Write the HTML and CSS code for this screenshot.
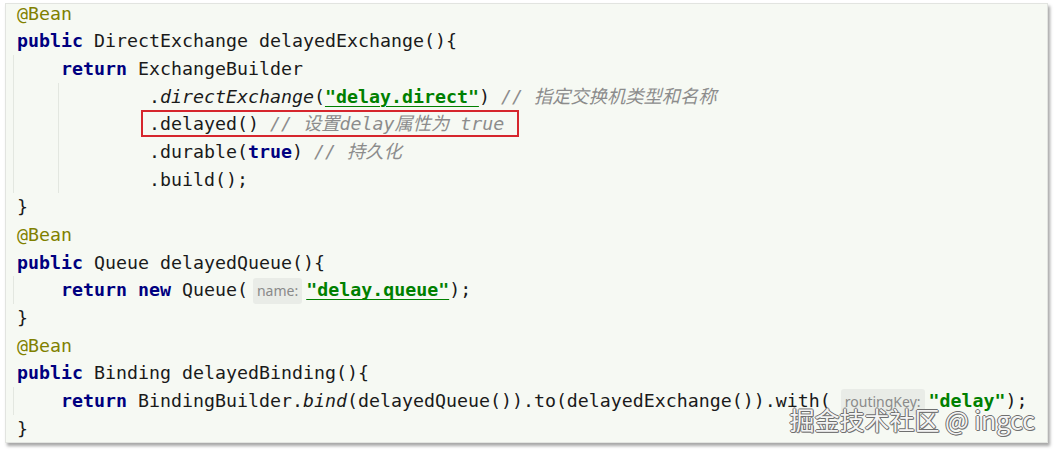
FILE: index.html
```html
<!DOCTYPE html>
<html lang="zh">
<head>
<meta charset="utf-8">
<title>delayed exchange</title>
<link rel="stylesheet" href="styles.css">
</head>
<body>
<div class="panel">
  <div class="code">
    <div class="ln"><span class="ann">@Bean</span></div>
    <div class="ln"><span class="kw">public</span> DirectExchange delayedExchange(){</div>
    <div class="ln g1">    <span class="kw">return</span> ExchangeBuilder</div>
    <div class="ln g1 g2">            .<span class="it">directExchange</span>(<span class="str ul">"delay.direct"</span>) <span class="cm">// 指定交换机类型和名称</span></div>
    <div class="ln g1 g2">            <span class="box">.delayed() <span class="cm">// 设置delay属性为 true</span></span></div>
    <div class="ln g1 g2">            .durable(<span class="kw">true</span>) <span class="cm">// 持久化</span></div>
    <div class="ln g1 g2">            .build();</div>
    <div class="ln">}</div>
    <div class="ln"><span class="ann">@Bean</span></div>
    <div class="ln"><span class="kw">public</span> Queue delayedQueue(){</div>
    <div class="ln g1">    <span class="kw">return</span> <span class="kw">new</span> Queue(<span class="hint">name:</span><span class="str ul">"delay.queue"</span>);</div>
    <div class="ln">}</div>
    <div class="ln"><span class="ann">@Bean</span></div>
    <div class="ln"><span class="kw">public</span> Binding delayedBinding(){</div>
    <div class="ln g1">    <span class="kw">return</span> BindingBuilder.<span class="it">bind</span>(delayedQueue()).to(delayedExchange()).with(<span class="hint hint-wide">routingKey:</span><span class="str">"delay"</span>);</div>
    <div class="ln">}</div>
  </div>
  <div class="watermark">掘金技术社区 @ ingcc</div>
</div>
</body>
</html>
```

FILE: styles.css
```css
html, body {
  margin: 0;
  padding: 0;
  background: #ffffff;
}

body {
  width: 1054px;
  height: 451px;
  overflow: hidden;
}

.panel {
  position: relative;
  margin: 3px 6px 0 5px;
  height: 438px;
  background: #f6f9f3;
  border: 1px solid #e2e4e0;
  box-shadow: 2px 3px 3px rgba(0, 0, 0, 0.35);
  overflow: hidden;
}

.code {
  margin-top: -4.5px;
  padding-left: 11px;
  font-family: "DejaVu Sans Mono", "Noto Sans CJK SC", monospace;
  font-size: 18.27px;
  line-height: 27.7px;
  color: #1a1a1a;
}

.ln {
  height: 27.7px;
  white-space: pre;
}

.g1 {
  box-shadow: inset 1px 0 0 0 #e3e7e0;
  margin-left: -4px;
  padding-left: 4px;
}

.g2 {
  background-image: linear-gradient(#e3e7e0, #e3e7e0);
  background-size: 1px 100%;
  background-position: 45px 0;
  background-repeat: no-repeat;
}

.kw {
  color: #000080;
  font-weight: bold;
}

.ann {
  color: #808000;
}

.str {
  color: #008000;
  font-weight: bold;
}

.ul {
  text-decoration: underline;
  text-decoration-thickness: 1px;
  text-underline-offset: 3px;
}

.it {
  font-style: italic;
}

.cm {
  color: #8c8c8c;
  font-style: italic;
  font-family: "DejaVu Sans Mono", "Noto Sans CJK SC", monospace;
}

.box {
  border: 2px solid #d6262d;
  padding: 1px 13px 1px 6px;
  margin-left: -8px;
}

.hint {
  font-family: "Noto Sans", "Open Sans", sans-serif;
  font-size: 14px;
  color: #8a8a8a;
  background: #e9ece7;
  border-radius: 3px;
  padding: 3px 4px 4px 4px;
  margin: 0 4px 0 5px;
}

.hint-wide {
  margin-left: 10px;
}

.watermark {
  position: absolute;
  right: 12px;
  bottom: 6px;
  font-family: "Noto Sans CJK SC", "Noto Sans", sans-serif;
  font-size: 25px;
  line-height: 34px;
  color: #f4f4f4;
  text-shadow: 1px 0 #6f6f6f, -1px 0 #6f6f6f, 0 1px #6f6f6f, 0 -1px #6f6f6f, 1px 1px #8a8a8a;
  white-space: nowrap;
}
```
